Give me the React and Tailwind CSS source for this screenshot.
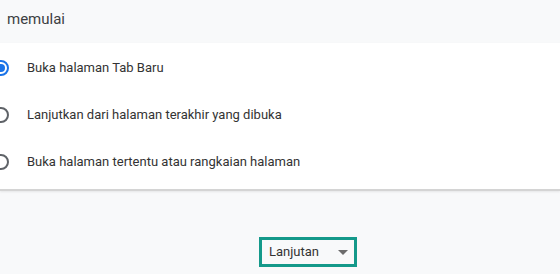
export default function App() {
  const font = { fontFamily: "Roboto, 'Liberation Sans', sans-serif" };
  const rows = [
    { label: "Buka halaman Tab Baru", checked: true },
    { label: "Lanjutkan dari halaman terakhir yang dibuka", checked: false },
    { label: "Buka halaman tertentu atau rangkaian halaman", checked: false },
  ];
  return (
    <div className="w-[560px] h-[274px] bg-[#f8f9fa] overflow-hidden flex flex-col" style={font}>
      <div className="h-[43px] flex items-center pl-[7px] pb-[4px] text-[15px] text-[#3c4043]">memulai</div>
      <div className="bg-white border-b-2 border-[#d4d4d4] shadow-[0_1px_2px_rgba(0,0,0,0.08)] flex flex-col pt-[1px] pb-[4px]">
        {rows.map((r, i) => (
          <div key={i} className="h-[47px] flex items-center">
            <div className="w-[16px] h-[16px] -ml-[7px] mr-[18px] rounded-full flex items-center justify-center shrink-0 border-2 border-solid"
              style={{ borderColor: r.checked ? "#1a73e8" : "#5f6368" }}>
              {r.checked && <div className="w-[8px] h-[8px] rounded-full bg-[#1a73e8]" />}
            </div>
            <span className="text-[13px] text-[#333333]">{r.label}</span>
          </div>
        ))}
      </div>
      <div className="flex-1 flex items-end justify-center pb-[7px] pl-[56px]">
        <div className="w-[98px] h-[30px] border-[3px] border-[#14998a] flex items-center justify-between pl-[7px] pr-[6px]">
          <span className="text-[13px] text-[#333333]">Lanjutan</span>
          <svg width="10" height="5" viewBox="0 0 10 5"><path d="M0 0 L10 0 L5 5 Z" fill="#6b6b6b" /></svg>
        </div>
      </div>
    </div>
  );
}
